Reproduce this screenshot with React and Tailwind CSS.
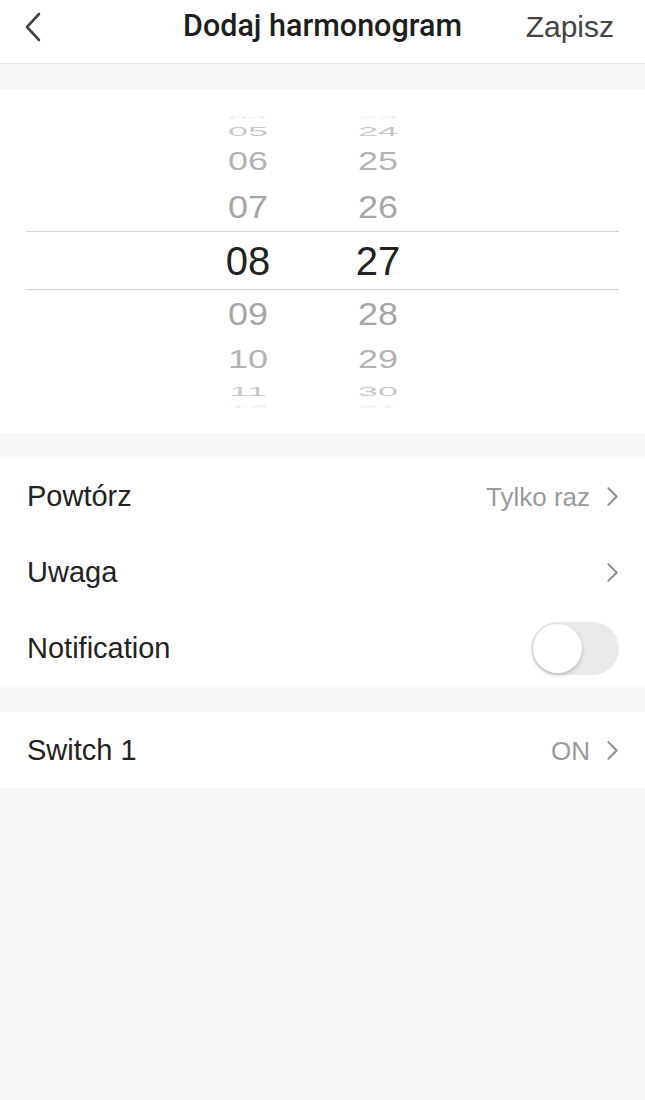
import React, { useState } from 'react'

const HOURS = ['04', '05', '06', '07', '08', '09', '10', '11', '12']
const MINUTES = ['23', '24', '25', '26', '27', '28', '29', '30', '31']

// wheel rows, outermost to selected to outermost
const ROWS = [
  { h: 'h-[10px]', size: 'text-[36px]', scale: 'scale-y-[0.12]', color: 'text-[#ececec]' },
  { h: 'h-[16px]', size: 'text-[36px]', scale: 'scale-y-[0.38]', color: 'text-[#c8c8c8]' },
  { h: 'h-[46px]', size: 'text-[36px]', scale: 'scale-y-[0.7]', color: 'text-[#b2b2b2]' },
  { h: 'h-[46px]', size: 'text-[36px]', scale: 'scale-y-[0.86]', color: 'text-[#a6a6a6]' },
  { h: 'h-[59px]', size: 'text-[40px]', scale: 'scale-y-100', color: 'text-[#222]', selected: true },
  { h: 'h-[50px]', size: 'text-[36px]', scale: 'scale-y-[0.86]', color: 'text-[#a6a6a6]' },
  { h: 'h-[40px]', size: 'text-[36px]', scale: 'scale-y-[0.7]', color: 'text-[#b2b2b2]' },
  { h: 'h-[22px]', size: 'text-[36px]', scale: 'scale-y-[0.38]', color: 'text-[#c8c8c8]' },
  { h: 'h-[10px]', size: 'text-[36px]', scale: 'scale-y-[0.12]', color: 'text-[#ececec]' },
]

function Chevron({ className = '' }) {
  return (
    <svg viewBox="0 0 12 20" className={className} fill="none" stroke="currentColor" strokeWidth="1.8" strokeLinecap="round" strokeLinejoin="round">
      <path d="M2 2 L10 10 L2 18" />
    </svg>
  )
}

function Row({ label, value, children }) {
  return (
    <div className="flex items-center h-[76px] pl-[27px] pr-[26px]">
      <span className="text-[29px] text-[#222] mt-[2px]">{label}</span>
      <div className="ml-auto flex items-center">
        {children}
        {value !== undefined && (
          <>
            {value && <span className="text-[26px] text-[#9a9a9a] mr-[16px] mt-[2px]">{value}</span>}
            <Chevron className="w-[13px] h-[21px] text-[#8a8a8a]" />
          </>
        )}
      </div>
    </div>
  )
}

export default function App() {
  const [notify, setNotify] = useState(false)

  return (
    <div className="min-h-[1100px] bg-[#f8f8f8]" style={{ fontFamily: '"Liberation Sans", Arial, sans-serif' }}>
      {/* Header */}
      <div className="relative h-[64px] bg-white border-b border-[#e2e2e2] flex items-center justify-center">
        <svg viewBox="0 0 18 30" className="absolute left-[24px] top-[12px] w-[18px] h-[30px] text-[#444]" fill="none" stroke="currentColor" strokeWidth="2.6" strokeLinecap="round" strokeLinejoin="round">
          <path d="M15 2 L3 15 L15 28" />
        </svg>
        <h1 className="text-[30.5px] font-medium text-[#1e1e1e] -mt-[11px]" style={{ fontFamily: 'Roboto, "Liberation Sans", sans-serif' }}>
          Dodaj harmonogram
        </h1>
        <span className="absolute right-[31px] top-[4px] text-[30px] text-[#444]">Zapisz</span>
      </div>

      {/* Time picker */}
      <div className="mt-[25px] bg-white h-[344px] flex flex-col pt-[24px] px-[26px]">
        {ROWS.map((r, i) => (
          <div
            key={i}
            className={`flex items-center shrink-0 ${r.h} ${r.selected ? 'border-y border-[#d2d2d2]' : ''}`}
          >
            <div className={`ml-[172px] w-[100px] flex justify-center ${r.size} ${r.color} leading-none`}>
              <span className={`inline-block ${r.scale}`}>{HOURS[i]}</span>
            </div>
            <div className={`ml-[30px] w-[100px] flex justify-center ${r.size} ${r.color} leading-none`}>
              <span className={`inline-block ${r.scale}`}>{MINUTES[i]}</span>
            </div>
          </div>
        ))}
      </div>

      {/* Options */}
      <div className="mt-[25px] bg-white">
        <Row label="Powtórz" value="Tylko raz" />
        <Row label="Uwaga" value="" />
        <Row label="Notification">
          <button
            onClick={() => setNotify(!notify)}
            className={`relative w-[88px] h-[53px] rounded-full ${notify ? 'bg-[#4cd964]' : 'bg-[#e9e9e9]'}`}
          >
            <span
              className={`absolute top-[2px] ${notify ? 'left-[37px]' : 'left-[2px]'} w-[49px] h-[49px] rounded-full bg-white shadow-[0_2px_4px_rgba(0,0,0,0.2)]`}
            />
          </button>
        </Row>
      </div>

      <div className="mt-[26px] bg-white">
        <Row label="Switch 1" value="ON" />
      </div>
    </div>
  )
}
